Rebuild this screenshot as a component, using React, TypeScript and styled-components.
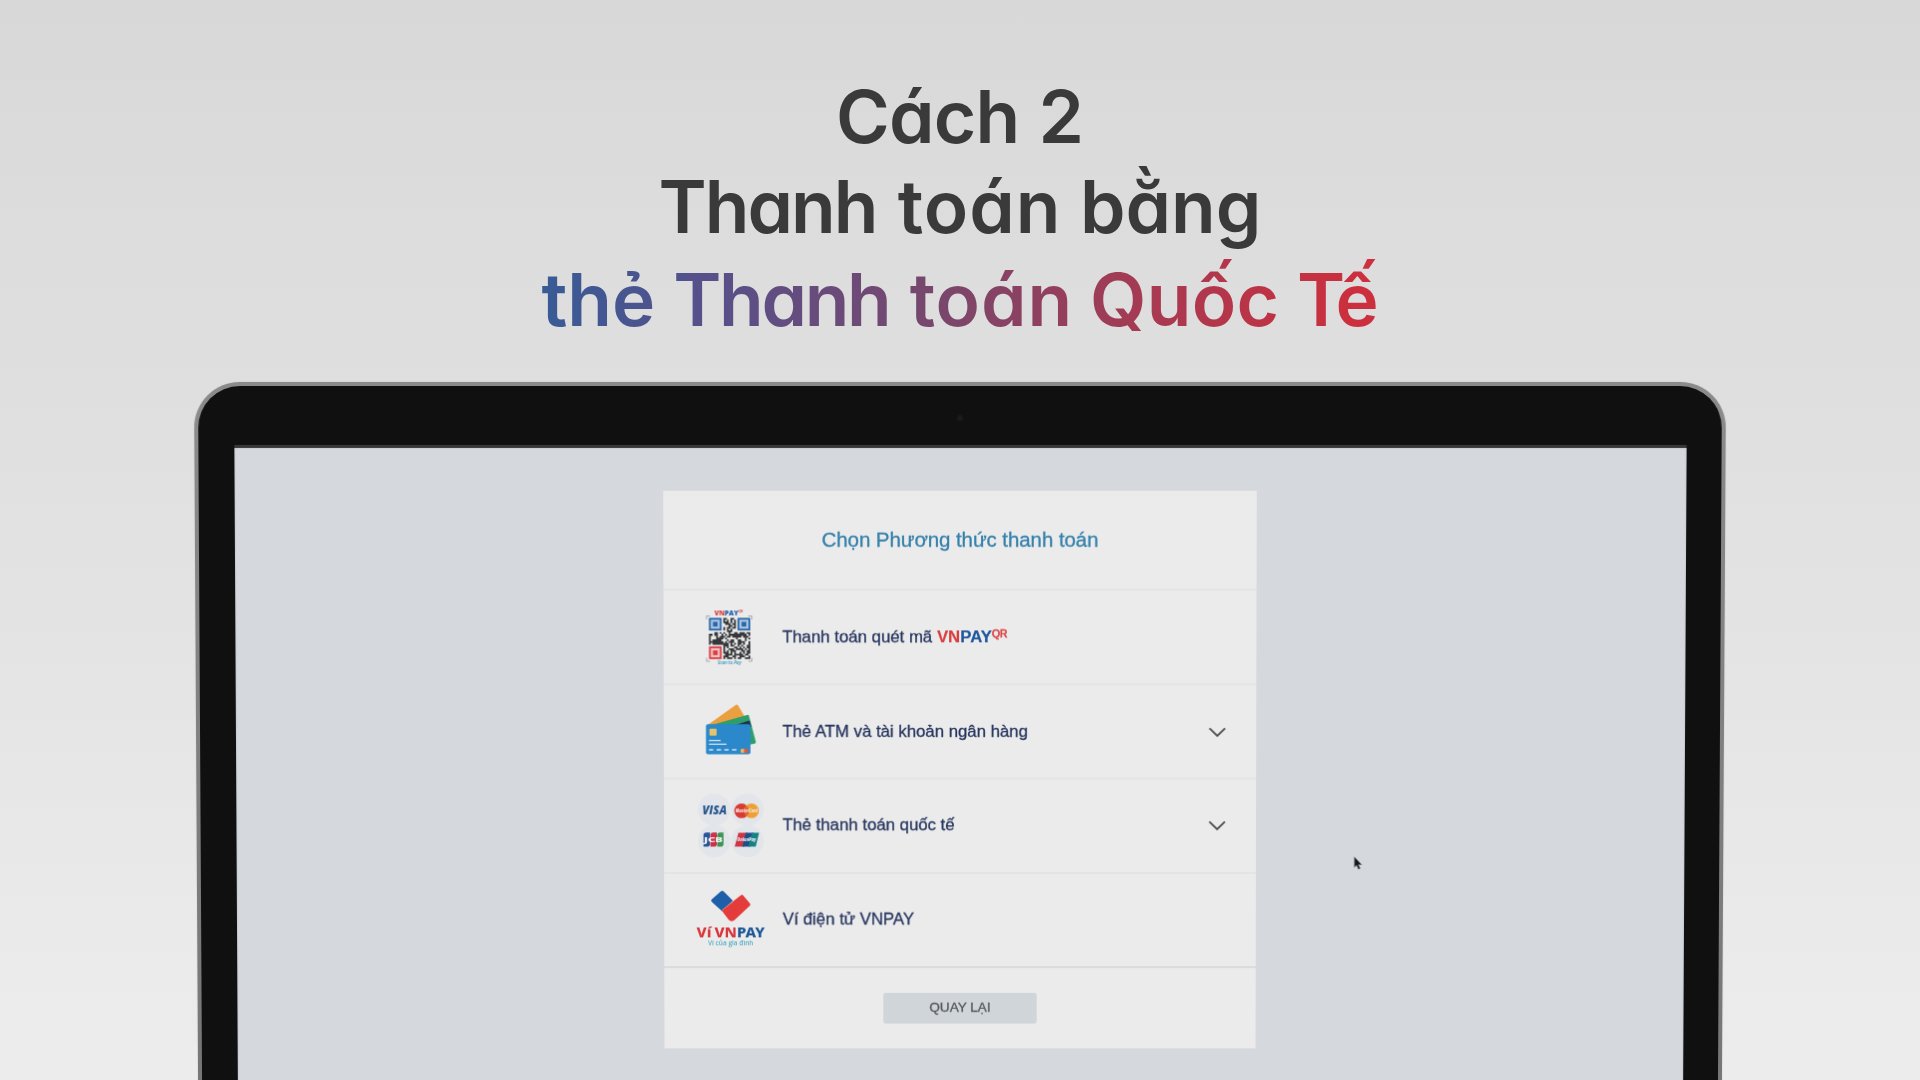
import React from 'react';
import styled, { createGlobalStyle } from 'styled-components';

const Global = createGlobalStyle`
  * { box-sizing: border-box; }
  html, body { margin: 0; padding: 0; overflow: hidden; }
`;

const Page = styled.main`
  width: 1920px;
  height: 1080px;
  overflow: hidden;
  display: flex;
  flex-direction: column;
  align-items: center;
  background: linear-gradient(180deg, #d8d8d8 0%, #dcdcdc 18%, #dfdfdf 36%, #e4e4e4 60%, #ebebeb 90%, #ececec 100%);
  font-family: 'Liberation Sans', Arial, sans-serif;
`;

const Heading = styled.h1`
  margin: 0;
  padding-top: 72px;
  height: 382px;
  flex: none;
  display: flex;
  flex-direction: column;
  align-items: center;
  font-family: Inter, 'Open Sans', sans-serif;
  font-size: 73px;
  font-weight: 600;
  font-feature-settings: 'cv11' 1, 'ss03' 1;
  color: #3a3a3a;
`;

const HeadingLine = styled.span<{ $height: number; $gap: number }>`
  display: block;
  white-space: nowrap;
  height: ${(p) => p.$height}px;
  line-height: ${(p) => p.$height}px;
  word-spacing: ${(p) => p.$gap}px;
`;

const GradientLine = styled(HeadingLine)`
  background: linear-gradient(90deg, #385b96 0%, #57508a 20%, #7a466b 48%, #a33b54 70%, #cc2f3d 97%);
  -webkit-background-clip: text;
  background-clip: text;
  color: transparent;
`;

const Word = styled.span<{ $track: number }>`
  letter-spacing: ${(p) => p.$track}px;
  margin-right: ${(p) => -p.$track}px;
`;

const Laptop = styled.section`
  width: 1532px;
  height: 740px;
  flex: none;
  padding: 3.5px 4px 0;
  border-radius: 46px 46px 0 0;
  background: linear-gradient(180deg, #8b8b8b, #757575);
  box-shadow: 0 0 1px #9a9a9a;
  transform-origin: 50% 0;
  transform: perspective(4000px) rotateX(-1.74deg);
`;

const Bezel = styled.div`
  height: 100%;
  padding: 0 35.5px;
  border-radius: 42px 42px 0 0;
  background: #101010;
  display: flex;
  flex-direction: column;
`;

const CameraBar = styled.div`
  height: 62px;
  flex: none;
  display: flex;
  align-items: center;
  justify-content: center;
  padding-top: 5px;
  border-bottom: 3px solid #373638;
`;

const Camera = styled.i`
  width: 6px;
  height: 6px;
  border-radius: 50%;
  background: #1a1a1d;
`;

const Screen = styled.div`
  position: relative;
  flex: 1;
  display: flex;
  justify-content: center;
  align-items: flex-start;
  padding-top: 43.5px;
  background: #d5d9de;
  box-shadow: inset 0 0 2px #a9abae;
`;

const Card = styled.div`
  width: 594px;
  display: flex;
  flex-direction: column;
  background: #ebebeb;
`;

const CardHeader = styled.h2`
  margin: 0;
  height: 98.4px;
  display: flex;
  align-items: center;
  justify-content: center;
  font-size: 20.5px;
  letter-spacing: -0.08px;
  font-weight: 400;
  color: #3481ab;
  -webkit-text-stroke: 0.3px #3481ab;
`;

const Method = styled.div`
  height: 94.8px;
  border-top: 2px solid #e3e4e5;
  padding: 0 30px;
  display: flex;
  align-items: center;
  gap: 17px;
`;

const IconBox = styled.svg`
  width: 72px;
  height: 72px;
  flex: none;
  overflow: visible;
`;

const Label = styled.span`
  flex: 1;
  white-space: nowrap;
  font-size: 16.8px;
  line-height: 22px;
  color: #27365f;
  -webkit-text-stroke: 0.3px #27365f;
`;

const Brand = styled.b<{ $color: string }>`
  color: ${(p) => p.$color};
  -webkit-text-stroke: 0.2px ${(p) => p.$color};
`;

const Sup = styled.span`
  font-size: 10.4px;
  color: #d9403f;
  -webkit-text-stroke: 0.6px #d9403f;
  vertical-align: 5.2px;
  line-height: 0;
`;

const Chevron = styled.svg`
  width: 18px;
  height: 12px;
  flex: none;
`;

const Footer = styled.div`
  height: 83px;
  border-top: 2px solid #dadbdd;
  display: flex;
  align-items: center;
  justify-content: center;
`;

const BackButton = styled.button`
  width: 154px;
  height: 31px;
  padding: 0 0 2px;
  border: 0;
  border-radius: 2px;
  background: #cfd5d9;
  color: #53565b;
  font-family: inherit;
  font-size: 13.6px;
  -webkit-text-stroke: 0.3px #53565b;
`;

const Cursor = styled.svg`
  position: absolute;
  left: 1121px;
  top: 410px;
  width: 10px;
  height: 15px;
`;

const MODULE = 1.8;
const GRID = 23;

/* Pseudo-random but stable modules, leaving the three finder corners free */
const qrPath = (() => {
  let seed = 41;
  let d = '';
  for (let r = 0; r < GRID; r++) {
    for (let c = 0; c < GRID; c++) {
      seed = (seed * 1103515245 + 12345) % 2147483648;
      const inFinder = (r < 8 && (c < 8 || c > 14)) || (r > 14 && c < 8);
      if (!inFinder && seed / 2147483648 < 0.6) {
        d += `M${(c * MODULE).toFixed(2)} ${(r * MODULE).toFixed(2)}h1.8v1.8h-1.8z`;
      }
    }
  }
  return d;
})();

const Finder = ({ x, y, color, fill = '#ebebeb' }: { x: number; y: number; color: string; fill?: string }) => (
  <g transform={`translate(${x} ${y})`}>
    <rect x="0.9" y="0.9" width="10.9" height="10.9" fill={fill} stroke={color} strokeWidth="1.8" />
    <rect x="4" y="4" width="4.7" height="4.7" fill={color} />
  </g>
);

const QrIcon = () => (
  <IconBox viewBox="0 0 72 72">
    <text x="21" y="13.6" fontFamily="Open Sans, sans-serif" fontWeight="800" fontSize="6.6" textLength="24" lengthAdjust="spacingAndGlyphs">
      <tspan fill="#d8403f">VN</tspan>
      <tspan fill="#1d5ca6">PAY</tspan>
    </text>
    <text x="45.2" y="11" fontFamily="Open Sans, sans-serif" fontWeight="700" fontSize="3" fill="#d8403f">QR</text>
    <path d="M13 18v-3.5h3.5M55 14.5h3.5V18M13 56.5V60h3.5M55 60h3.5v-3.5" fill="none" stroke="#a3a8ad" strokeWidth="1" />
    <path d={qrPath} transform="translate(15.5 16.4)" fill="#35373a" />
    <Finder x={15.5} y={16.4} color="#2a66a8" fill="#a9c6e3" />
    <Finder x={44.2} y={16.4} color="#2a66a8" fill="#a9c6e3" />
    <Finder x={15.5} y={45.1} color="#dc3d42" fill="#efc5c6" />
    <text x="24" y="63.3" fontFamily="Open Sans, sans-serif" fontStyle="italic" fontWeight="600" fontSize="5" fill="#3f9cc2" textLength="24">Scan to Pay</text>
  </IconBox>
);

const CardsIcon = () => (
  <IconBox viewBox="0 0 72 72">
    <path d="M14 29 42 9q1.6-1 2.6.6L52 22l-8 10z" fill="#eaa040" />
    <path d="M18 29 53.5 18.9q1.6-.4 2 1.1l6.8 26q.3 1.3-1 1.7L55 49z" fill="#2f9e6c" />
    <path d="M40 29.5 56 24.6l1.8 6.4z" fill="#1c3450" />
    <rect x="12.3" y="28.2" width="44.6" height="30.2" rx="2" fill="#2a88cb" />
    <rect x="15.8" y="32.8" width="7.2" height="7" rx="1" fill="#e5c46a" />
    <path d="M15.3 44.7h11.7M15.3 48.4h17.6" stroke="#d5e6f2" strokeWidth="1.2" />
    <path d="M15.3 54h4.2M23 54h4.4M30.7 54H35M38.4 54h4.4" stroke="#d5e6f2" strokeWidth="1.7" />
    <circle cx="49" cy="55" r="2.2" fill="#efb458" />
    <circle cx="52.6" cy="55" r="2.2" fill="#d8583c" />
  </IconBox>
);

const NetworksIcon = () => (
  <IconBox viewBox="0 0 72 72">
    {[20.3, 53.7].map((cx) => [20.3, 52].map((cy) => <circle key={`${cx}-${cy}`} cx={cx} cy={cy} r="16.3" fill="#e2e6ea" />))}
    <text x="8.4" y="25.2" fontFamily="Open Sans, sans-serif" fontStyle="italic" fontWeight="800" fontSize="11.4" fill="#28568f" textLength="24.6" lengthAdjust="spacingAndGlyphs">VISA</text>
    <circle cx="47.9" cy="21.4" r="7.4" fill="#d93a33" />
    <circle cx="57.8" cy="21.4" r="7.4" fill="#efa034" />
    <path d="M52.9 15.9a7.4 7.4 0 0 1 0 11a7.4 7.4 0 0 1 0-11z" fill="#e2682f" />
    <text x="41.8" y="23.2" fontFamily="Open Sans, sans-serif" fontStyle="italic" fontWeight="800" fontSize="4.6" fill="#f4e8e2" textLength="22" lengthAdjust="spacingAndGlyphs">MasterCard</text>
    <path d="M9.6 57.5V46q0-2.8 2.8-2.8h3.7v11.5q0 2.8-2.8 2.8z" fill="#28569a" />
    <path d="M16.5 57.5V46q0-2.8 2.8-2.8H23v11.5q0 2.8-2.8 2.8z" fill="#cc3048" />
    <path d="M23.4 57.5V46q0-2.8 2.8-2.8h3.5v11.5q0 2.8-2.8 2.8z" fill="#3d9650" />
    <text x="10" y="52.8" fontFamily="Open Sans, sans-serif" fontWeight="800" fontSize="6.6" fill="#eef0f2" textLength="19" lengthAdjust="spacingAndGlyphs">JCB</text>
    <path d="M44.7 43.4h9L50.3 57.6h-9.4z" fill="#ce3648" />
    <path d="M52 43.4h8L56.6 57.6h-8z" fill="#1d5088" />
    <path d="M58.2 43.4h7.2L62 57.6h-7.4z" fill="#178285" />
    <text x="43.3" y="52.2" fontFamily="Open Sans, sans-serif" fontStyle="italic" fontWeight="800" fontSize="4.6" fill="#e4edf2" textLength="19" lengthAdjust="spacingAndGlyphs">UnionPay</text>
  </IconBox>
);

const WalletIcon = () => (
  <IconBox viewBox="0 0 72 72">
    <path d="M27 7.6q1.3-1.2 2.6 0L39 17 28 27.4 17.6 18q-1-1.1 0-2.3z" fill="#1f5ea8" />
    <path d="M27.6 26.8 47 11.5q1.3-1 2.4.2l6.7 8q1 1.2 0 2.3L40.6 36.6q-2.8 2.2-5.6 0z" fill="#e43b3b" />
    <path d="M28.2 26.4 41 16.2" stroke="#ef9a98" strokeWidth="0.7" />
    <text x="2.6" y="54.2" fontFamily="Noto Sans, Open Sans, sans-serif" fontWeight="800" fontSize="14.6" wordSpacing="-0.8" textLength="68.4" lengthAdjust="spacingAndGlyphs">
      <tspan fill="#d8363c">Ví VN</tspan>
      <tspan fill="#1d5797">PAY</tspan>
    </text>
    <text x="14" y="62.4" fontFamily="Open Sans, sans-serif" fontSize="7.2" fontWeight="600" fill="#54aec6" textLength="45.5" lengthAdjust="spacingAndGlyphs">Ví của gia đình</text>
  </IconBox>
);

const ChevronDown = () => (
  <Chevron viewBox="0 0 18 12">
    <path d="M1.2 2.4 9 10l7.8-7.6" fill="none" stroke="#4b4d50" strokeWidth="1.8" />
  </Chevron>
);

export default function App() {
  return (
    <>
      <Global />
      <Page>
        <Heading>
          <HeadingLine $height={90} $gap={0}>
            <Word $track={-0.8}>Cách</Word> <Word $track={0}>2</Word>
          </HeadingLine>
          <HeadingLine $height={90} $gap={1}>
            <Word $track={-2}>Thanh</Word> <Word $track={1}>toán</Word> <Word $track={0}>bằng</Word>
          </HeadingLine>
          <GradientLine $height={96} $gap={-0.5}>
            <Word $track={0}>thẻ</Word> <Word $track={-2.3}>Thanh</Word> <Word $track={0.9}>toán</Word>{' '}
            <Word $track={0.3}>Quốc</Word> <Word $track={-4}>Tế</Word>
          </GradientLine>
        </Heading>
        <Laptop>
          <Bezel>
            <CameraBar>
              <Camera />
            </CameraBar>
            <Screen>
              <Card>
                <CardHeader>Chọn Phương thức thanh toán</CardHeader>
                <Method>
                  <QrIcon />
                  <Label>
                    Thanh toán quét mã <Brand $color="#d9403f">VN</Brand>
                    <Brand $color="#1f569c">PAY</Brand>
                    <Sup>QR</Sup>
                  </Label>
                </Method>
                <Method>
                  <CardsIcon />
                  <Label>Thẻ ATM và tài khoản ngân hàng</Label>
                  <ChevronDown />
                </Method>
                <Method>
                  <NetworksIcon />
                  <Label>Thẻ thanh toán quốc tế</Label>
                  <ChevronDown />
                </Method>
                <Method>
                  <WalletIcon />
                  <Label>Ví điện tử VNPAY</Label>
                </Method>
                <Footer>
                  <BackButton>QUAY LẠI</BackButton>
                </Footer>
              </Card>
              <Cursor viewBox="0 0 10 15">
                <path d="M.8.8v10.6l2.3-2.1 1.7 4 1.9-.8L5 8.7h3.2z" fill="#17181a" stroke="#8d9095" strokeWidth="0.5" />
              </Cursor>
            </Screen>
          </Bezel>
        </Laptop>
      </Page>
    </>
  );
}
